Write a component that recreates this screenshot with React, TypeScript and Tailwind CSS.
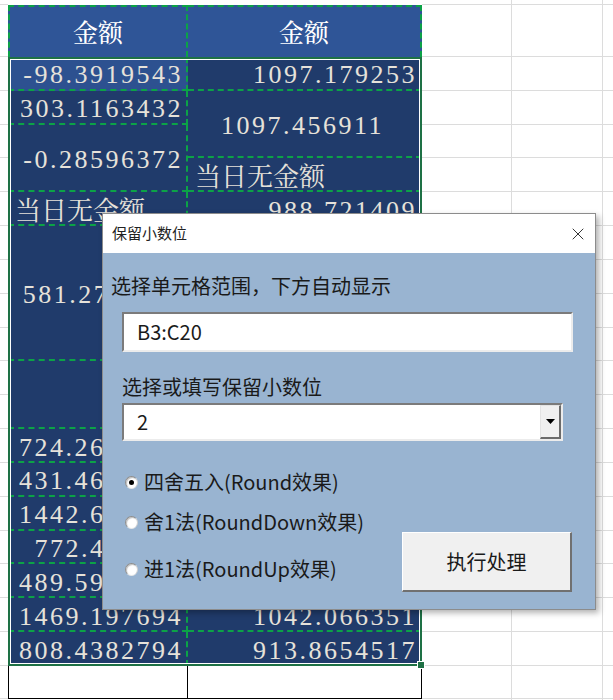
import { X } from "lucide-react";

// Excel sheet behind a VBA UserForm ("保留小数位")
const ROW_H = "h-[33.83px]";
const DASH = "border-dashed border-[#0ca247]";

type Cell = { pos: string; t: string; align: "r" | "c" | "l"; active?: boolean; cjk?: boolean };

const CELLS: Cell[] = [
  // column B
  { pos: "col-start-1 row-start-1", t: "-98.3919543", align: "r", active: true },
  { pos: "col-start-1 row-start-2", t: "303.1163432", align: "r" },
  { pos: "col-start-1 row-start-3 row-span-2", t: "-0.28596372", align: "r" },
  { pos: "col-start-1 row-start-5", t: "当日无金额", align: "l", cjk: true },
  { pos: "col-start-1 row-start-6 row-span-4", t: "581.276394", align: "c" },
  { pos: "col-start-1 row-start-10 row-span-2", t: "", align: "r" },
  { pos: "col-start-1 row-start-12", t: "724.2613875", align: "r" },
  { pos: "col-start-1 row-start-13", t: "431.4629517", align: "r" },
  { pos: "col-start-1 row-start-14", t: "1442.659213", align: "r" },
  { pos: "col-start-1 row-start-15", t: "772.415863", align: "r" },
  { pos: "col-start-1 row-start-16", t: "489.5917364", align: "r" },
  { pos: "col-start-1 row-start-17", t: "1469.197694", align: "r" },
  { pos: "col-start-1 row-start-18", t: "808.4382794", align: "r" },
  // column C
  { pos: "col-start-2 row-start-1", t: "1097.179253", align: "r" },
  { pos: "col-start-2 row-start-2 row-span-2", t: "1097.456911", align: "c" },
  { pos: "col-start-2 row-start-4", t: "当日无金额", align: "l", cjk: true },
  { pos: "col-start-2 row-start-5", t: "988.721409", align: "r" },
  { pos: "col-start-2 row-start-6 row-span-2", t: "1105.302718", align: "c" },
  { pos: "col-start-2 row-start-8", t: "当日无金额", align: "l", cjk: true },
  { pos: "col-start-2 row-start-9", t: "964.285137", align: "r" },
  { pos: "col-start-2 row-start-10 row-span-2", t: "", align: "r" },
  { pos: "col-start-2 row-start-12", t: "1021.547836", align: "r" },
  { pos: "col-start-2 row-start-13", t: "876.9341025", align: "r" },
  { pos: "col-start-2 row-start-14", t: "1238.406152", align: "r" },
  { pos: "col-start-2 row-start-15", t: "995.1268473", align: "r" },
  { pos: "col-start-2 row-start-16", t: "1076.582914", align: "r" },
  { pos: "col-start-2 row-start-17", t: "1042.066351", align: "r" },
  { pos: "col-start-2 row-start-18", t: "913.8654517", align: "r" },
];

const ALIGN = { r: "justify-end pr-[3px]", c: "justify-center", l: "justify-start pl-[7px]" };

function SideCol({ className }: { className: string }) {
  return (
    <div className={`flex flex-col ${className}`}>
      <div className="h-[5px] shrink-0 border-b border-[#dcdcdc]" />
      <div className="h-[52px] shrink-0 border-b border-[#dcdcdc]" />
      {Array.from({ length: 18 }).map((_, i) => (
        <div key={i} className={`${ROW_H} shrink-0 border-b border-[#dcdcdc]`} />
      ))}
      <div className="h-[33px] shrink-0 border-b border-[#dcdcdc]" />
      <div className="flex-1" />
    </div>
  );
}

function Table() {
  return (
    <div className="flex w-[414px] shrink-0 flex-col">
      <div className="h-[5px] shrink-0" />
      <div className="grid h-[52px] shrink-0 grid-cols-[180px_234px] font-['Noto_Serif_CJK_SC','Noto_Sans_CJK_SC',serif] text-[25px] font-medium text-white">
        <div className={`flex items-center justify-center border-t-2 border-l-2 border-r-2 bg-[#2f5597] ${DASH}`}>金额</div>
        <div className={`flex items-center justify-center border-t-2 border-r-2 bg-[#2f5597] ${DASH}`}>金额</div>
      </div>
      <div className="relative grid shrink-0 grid-cols-[180px_234px] grid-rows-[repeat(18,33.83px)] bg-[#203b6b]">
        {CELLS.map((c) => (
          <div
            key={c.pos}
            className={`flex items-center border-b-2 ${DASH} ${c.pos} ${ALIGN[c.align]} ${
              c.pos.startsWith("col-start-1") ? "border-r-2" : "pr-[5px]"
            } ${c.active ? "bg-[#2d5190]" : "bg-[#203b6b]"} ${
              c.cjk
                ? "font-['Noto_Serif_CJK_SC','Noto_Sans_CJK_SC',serif] text-[26px]"
                : "pt-[4px] font-['Liberation_Serif','Noto_Sans_CJK_SC',serif] text-[26px] tracking-[2.5px]"
            } text-[#e6e2da]`}
          >
            {c.t}
          </div>
        ))}
        {/* selection frame */}
        <div className="pointer-events-none absolute inset-0 border-2 border-[#1e7145] shadow-[inset_0_0_0_1px_#ffffff]">
          <div className="absolute -right-[5px] -bottom-[5px] h-[8px] w-[8px] border border-white bg-[#1e7145]" />
        </div>
      </div>
      <div className="grid h-[33px] shrink-0 grid-cols-[180px_234px]">
        <div className="border-x border-b border-black" />
        <div className="border-r border-b border-black" />
      </div>
      <div className="flex-1" />
    </div>
  );
}

function Radio({ label, checked }: { label: string; checked?: boolean }) {
  return (
    <div className="flex h-[28px] items-center gap-[6px]">
      <div className="flex h-[13px] w-[13px] items-center justify-center rounded-full border border-[#8d8d8d] border-b-[#e6e6e6] border-r-[#d0d0d0] bg-white shadow-[inset_1px_1px_1px_rgba(0,0,0,0.25)]">
        {checked && <div className="h-[5px] w-[5px] rounded-full bg-black" />}
      </div>
      <span>{label}</span>
    </div>
  );
}

function Dialog() {
  return (
    <div className="absolute left-[102px] top-[213px] flex h-[397px] w-[494px] flex-col border border-[#8c8c8c] bg-[#99b4d1] font-['Noto_Sans_CJK_SC',sans-serif] text-[#1a1a1a] shadow-[3px_3px_6px_rgba(0,0,0,0.3)]">
      <div className="flex h-[39px] shrink-0 items-center justify-between bg-white pl-[9px] pr-[7px]">
        <span className="text-[15px] text-[#222]">保留小数位</span>
        <X size={20} strokeWidth={1.1} color="#222" />
      </div>
      <div className="flex flex-1 flex-col text-[20px] leading-[28px]">
        <div className="ml-[8px] mt-[19px]">选择单元格范围，下方自动显示</div>
        <div className="ml-[19px] mt-[12px] flex h-[40px] w-[451px] items-center border-2 border-[#7b7b7b] border-b-[#ececec] border-r-[#ececec] bg-white pl-[13px]">
          B3:C20
        </div>
        <div className="ml-[19px] mt-[21px]">选择或填写保留小数位</div>
        <div className="ml-[19px] mt-[2px] flex h-[38px] w-[441px] border-2 border-[#7b7b7b] border-b-[#ececec] border-r-[#ececec] bg-white">
          <div className="flex flex-1 items-center pl-[13px]">2</div>
          <div className="flex w-[21px] items-center justify-center border border-[#e3e3e3] border-b-2 border-r-2 border-b-[#6b6b6b] border-r-[#6b6b6b] bg-[#f0f0f0]">
            <svg width="9" height="5" viewBox="0 0 9 5">
              <path d="M0 0h9L4.5 5z" fill="#000" />
            </svg>
          </div>
        </div>
        <div className="mt-[27px] flex items-start">
          <div className="ml-[22px] flex flex-col">
            <Radio label="四舍五入(Round效果)" checked />
            <div className="mt-[12px]">
              <Radio label="舍1法(RoundDown效果)" />
            </div>
            <div className="mt-[19px]">
              <Radio label="进1法(RoundUp效果)" />
            </div>
          </div>
          <div className="ml-auto mr-[23px] mt-[64px] flex h-[60px] w-[170px] items-center justify-center border border-white border-b-2 border-r-2 border-b-[#707070] border-r-[#707070] bg-[#f0f0f0]">
            执行处理
          </div>
        </div>
      </div>
    </div>
  );
}

export default function App() {
  return (
    <div className="relative h-[700px] w-[613px] overflow-hidden bg-white">
      <div className="flex h-full">
        <SideCol className="w-[8px] shrink-0" />
        <Table />
        <SideCol className="w-[90px] shrink-0 border-r border-[#dcdcdc]" />
        <SideCol className="w-[91px] shrink-0 border-r border-[#dcdcdc]" />
        <SideCol className="flex-1" />
      </div>
      <Dialog />
    </div>
  );
}
